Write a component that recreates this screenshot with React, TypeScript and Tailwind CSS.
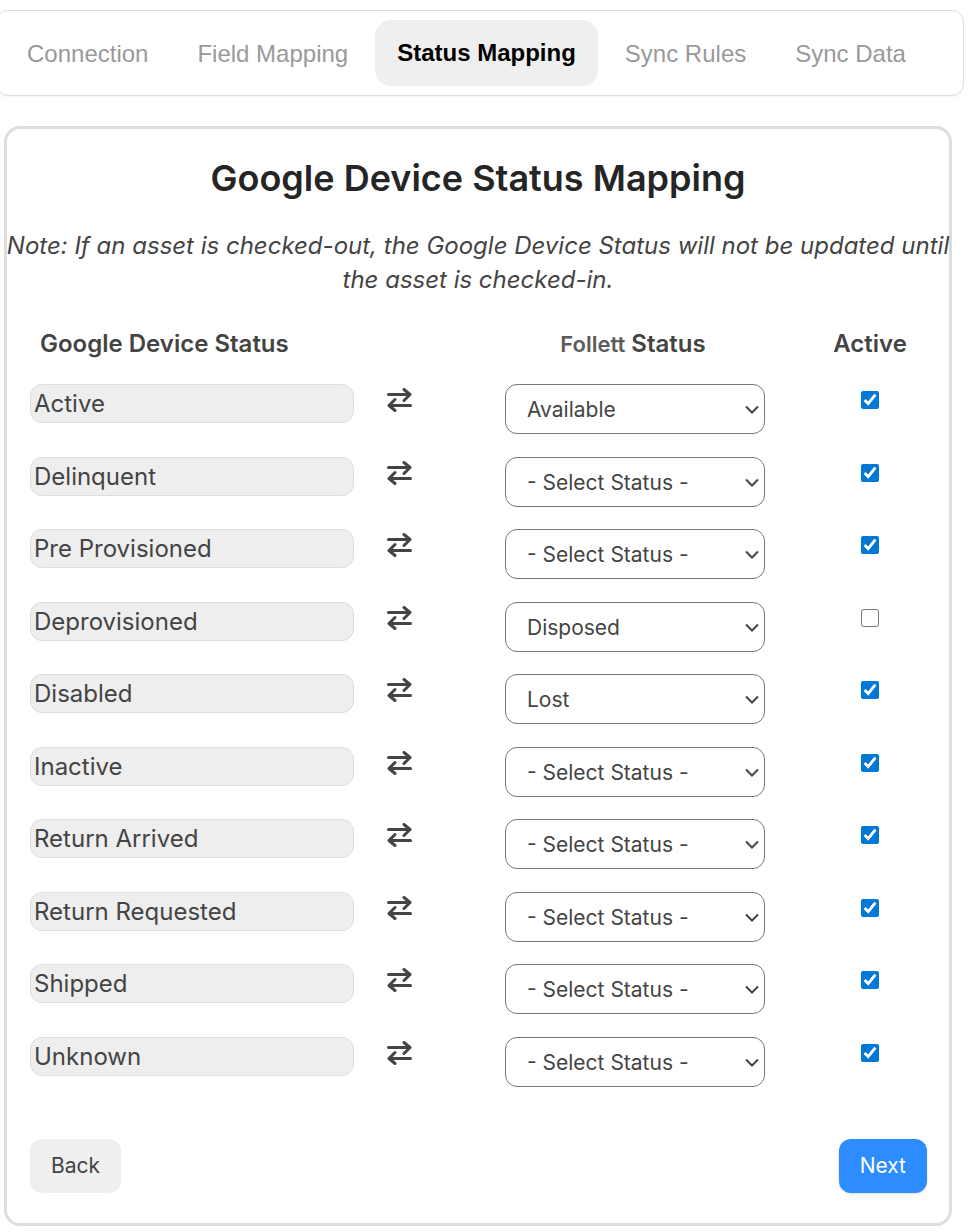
import { useState } from 'react';
import { clsx } from 'clsx';

const TABS = ['Connection', 'Field Mapping', 'Status Mapping', 'Sync Rules', 'Sync Data'];

const STATUS_OPTIONS = ['- Select Status -', 'Available', 'Disposed', 'Lost'];

const INITIAL_ROWS = [
    { google: 'Active', follett: 'Available', active: true },
    { google: 'Delinquent', follett: '- Select Status -', active: true },
    { google: 'Pre Provisioned', follett: '- Select Status -', active: true },
    { google: 'Deprovisioned', follett: 'Disposed', active: false },
    { google: 'Disabled', follett: 'Lost', active: true },
    { google: 'Inactive', follett: '- Select Status -', active: true },
    { google: 'Return Arrived', follett: '- Select Status -', active: true },
    { google: 'Return Requested', follett: '- Select Status -', active: true },
    { google: 'Shipped', follett: '- Select Status -', active: true },
    { google: 'Unknown', follett: '- Select Status -', active: true },
];

function SwapIcon() {
    return (
        <svg viewBox="0 0 25 24" className="block w-[25px] h-6" fill="none" stroke="currentColor" strokeWidth="3" aria-hidden="true">
            <path d="M1.5 6.5H22.5M2.5 17.5H23.5" strokeLinecap="round" />
            <path d="M17 1.5l6 5-6 6M8 11.5l-6 6 6 5" strokeLinecap="round" strokeLinejoin="round" />
        </svg>
    );
}

function StatusSelect({ label, value, onChange }: { label: string; value: string; onChange: (v: string) => void }) {
    return (
        <div className="relative w-[260px] mx-auto">
            <select
                aria-label={label}
                value={value}
                onChange={(e) => onChange(e.target.value)}
                className="block w-full h-[50px] appearance-none rounded-xl border border-[#767676] bg-white pt-px pl-[21px] pr-10 text-[21px] text-[#444]"
            >
                {STATUS_OPTIONS.map((o) => (
                    <option key={o}>{o}</option>
                ))}
            </select>
            <svg viewBox="0 0 14 9" className="pointer-events-none absolute right-1.5 top-[21px] w-3.5 h-[9px]" fill="none" stroke="#444" strokeWidth="2" aria-hidden="true">
                <path d="M1 1.5l6 6 6-6" />
            </svg>
        </div>
    );
}

export default function App() {
    const [tab, setTab] = useState('Status Mapping');
    const [rows, setRows] = useState(INITIAL_ROWS);

    const update = (index: number, patch: Partial<(typeof INITIAL_ROWS)[number]>) =>
        setRows(rows.map((r, i) => (i === index ? { ...r, ...patch } : r)));

    return (
        <div className="min-h-screen bg-white pt-2.5 pb-1.5 font-['Inter',sans-serif] text-[#444]">
            <nav className="-ml-1 mr-3 flex gap-[5px] rounded-xl border border-[#ddd] px-2 py-[9px] shadow-xs font-['Liberation_Sans',Arial,sans-serif]">
                {TABS.map((t) => (
                    <button
                        key={t}
                        type="button"
                        onClick={() => setTab(t)}
                        className={clsx(
                            'rounded-2xl px-[22px] text-2xl leading-[34px] whitespace-nowrap',
                            t === tab ? 'bg-[#efefef] py-4 font-bold text-black' : 'pt-[17px] pb-[15px] text-[#999]'
                        )}
                    >
                        {t}
                    </button>
                ))}
            </nav>

            <main className="mt-[30px] ml-1 mr-6 rounded-2xl border-3 border-[#ddd] pt-[27px] pb-[30px]">
                <h1 className="text-center text-4xl leading-[44px] font-semibold text-[#252525]">Google Device Status Mapping</h1>
                <p className="mt-[29px] -mx-1.5 text-center text-2xl leading-[34px] italic">
                    Note: If an asset is checked-out, the Google Device Status will not be updated until the asset is checked-in.
                </p>

                <div className="pl-[23px] pr-[22px]">
                    <table className="mt-7 w-full table-fixed border-collapse">
                        <colgroup>
                            <col />
                            <col className="w-[103px]" />
                            <col className="w-[356px]" />
                            <col className="w-[114px]" />
                        </colgroup>
                        <thead>
                            <tr className="h-[59px] align-top text-2xl leading-[38px]">
                                <th className="pl-2.5 text-left font-semibold">Google Device Status</th>
                                <td />
                                <th className="pr-1 font-semibold">
                                    <span className="text-[22px] text-[#5c5c5c]">Follett</span> Status
                                </th>
                                <th className="font-semibold">Active</th>
                            </tr>
                        </thead>
                        <tbody>
                            {rows.map((row, i) => (
                                <tr key={row.google} className="odd:h-[73px] even:h-[72px] align-top">
                                    <td>
                                        <input
                                            readOnly
                                            aria-label="Google device status"
                                            value={row.google}
                                            className="block w-full h-[39px] rounded-xl border border-[#ddd] bg-[#eee] px-[3px] text-2xl"
                                        />
                                    </td>
                                    <td className="pl-[33px] pt-1">
                                        <SwapIcon />
                                    </td>
                                    <td>
                                        <StatusSelect
                                            label={`Follett status for ${row.google}`}
                                            value={row.follett}
                                            onChange={(follett) => update(i, { follett })}
                                        />
                                    </td>
                                    <td className="pt-[7px]">
                                        <input
                                            type="checkbox"
                                            aria-label={`${row.google} active`}
                                            checked={row.active}
                                            onChange={(e) => update(i, { active: e.target.checked })}
                                            className="mx-auto block size-[18px] accent-[#0078d7]"
                                        />
                                    </td>
                                </tr>
                            ))}
                        </tbody>
                    </table>

                    <div className="mt-[30px] flex justify-between text-[21px] leading-[30px]">
                        <button type="button" className="rounded-xl bg-[#efefef] px-[21px] py-3">Back</button>
                        <button type="button" className="rounded-xl bg-[#2d8cff] px-[21px] py-3 text-white shadow-sm">Next</button>
                    </div>
                </div>
            </main>
        </div>
    );
}
